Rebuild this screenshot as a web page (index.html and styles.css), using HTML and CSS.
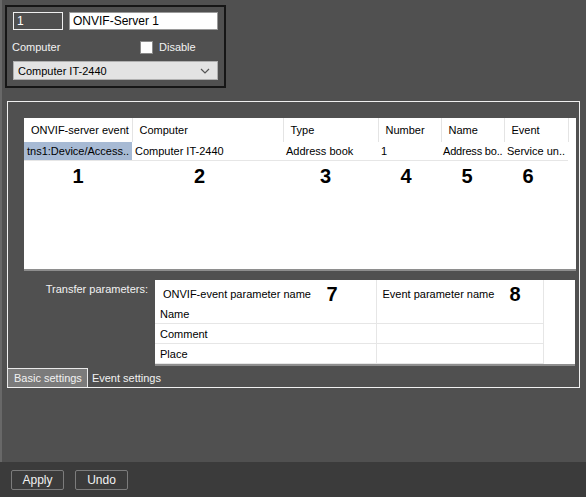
FILE: index.html
```html
<!DOCTYPE html>
<html lang="en">
<head>
    <meta charset="UTF-8">
    <title>ONVIF-Server 1</title>
    <link rel="stylesheet" href="styles.css">
</head>
<body>
    <div class="main">
        <div class="server-box">
            <div class="row-ids">
                <input type="text" class="id-input" value="1">
                <input type="text" class="name-input" value="ONVIF-Server 1">
            </div>
            <div class="row-computer">
                <span class="computer-label">Computer</span>
                <label class="disable"><span class="check"></span>Disable</label>
            </div>
            <div class="select">
                <span>Computer IT-2440</span>
                <svg class="chevron" width="10" height="6" viewBox="0 0 10 6"><path d="M1 1 L5 5 L9 1" fill="none" stroke="#555" stroke-width="1.2"/></svg>
            </div>
        </div>

        <div class="frame">
            <div class="frame-body">
                <div class="events">
                    <table class="events-table">
                        <colgroup>
                            <col class="c1"><col class="c2"><col class="c3"><col class="c4"><col class="c5"><col class="c6">
                        </colgroup>
                        <thead>
                            <tr>
                                <th>ONVIF-server event</th>
                                <th>Computer</th>
                                <th>Type</th>
                                <th>Number</th>
                                <th>Name</th>
                                <th>Event</th>
                            </tr>
                        </thead>
                        <tbody>
                            <tr>
                                <td class="selected">tns1:Device/Access..</td>
                                <td>Computer IT-2440</td>
                                <td>Address book</td>
                                <td>1</td>
                                <td class="tight">Address bo..</td>
                                <td>Service un..</td>
                            </tr>
                        </tbody>
                    </table>
                    <div class="marks">
                        <span class="n1">1</span>
                        <span class="n2">2</span>
                        <span class="n3">3</span>
                        <span class="n4">4</span>
                        <span class="n5">5</span>
                        <span class="n6">6</span>
                    </div>
                </div>

                <div class="transfer">
                    <div class="transfer-label">Transfer parameters:</div>
                    <div class="params">
                        <table class="params-table">
                            <colgroup><col class="p1"><col class="p2"></colgroup>
                            <thead>
                                <tr>
                                    <th class="h7"><div class="ph"><span>ONVIF-event parameter name</span><b class="mark">7</b></div></th>
                                    <th class="h8"><div class="ph"><span>Event parameter name</span><b class="mark">8</b></div></th>
                                </tr>
                            </thead>
                            <tbody>
                                <tr><td>Name</td><td></td></tr>
                                <tr><td>Comment</td><td></td></tr>
                                <tr><td>Place</td><td></td></tr>
                            </tbody>
                        </table>
                    </div>
                </div>
            </div>

            <div class="tabs">
                <span class="tab active">Basic settings</span>
                <span class="tab">Event settings</span>
            </div>
        </div>
    </div>

    <div class="footer">
        <button class="btn">Apply</button>
        <button class="btn">Undo</button>
    </div>
</body>
</html>
```

FILE: styles.css
```css
body {
    margin: 0;
    width: 586px;
    height: 497px;
    display: flex;
    flex-direction: column;
    background-color: #505050;
    font-family: "Liberation Sans", Arial, sans-serif;
    font-size: 11px;
    color: #f2f2f2;
    overflow: hidden;
}
.main {
    flex: 1;
    border-left: 2px solid #686868;
    padding: 5px 0 0 3px;
}

/* top box */
.server-box {
    width: 221px;
    height: 83px;
    box-sizing: border-box;
    border: 2px solid #161616;
    padding: 5px 6px 0 6px;
}
.row-ids {
    display: flex;
    gap: 6px;
}
.id-input, .name-input {
    height: 18px;
    box-sizing: border-box;
    padding: 0 3px;
    font-family: inherit;
    font-size: 12px;
    outline: none;
}
.id-input {
    width: 50px;
    border: 1px solid #f0f0f0;
    background-color: #505050;
    color: #fff;
}
.name-input {
    width: 149px;
    border: 1px solid #9a9a9a;
    background-color: #fff;
    color: #000;
}
.row-computer {
    display: flex;
    align-items: center;
    height: 12px;
    margin-top: 11px;
}
.computer-label {
    width: 128px;
    margin-left: -1px;
}
.disable {
    display: flex;
    align-items: center;
    gap: 6px;
}
.check {
    width: 11px;
    height: 11px;
    border: 1px solid #8a8a8a;
    background-color: #fff;
}
.select {
    display: flex;
    align-items: center;
    justify-content: space-between;
    width: 205px;
    height: 19px;
    box-sizing: border-box;
    margin-top: 8px;
    padding: 0 7px 0 4px;
    background-color: #e3e3e3;
    border: 1px solid #b0b0b0;
    color: #000;
}

/* settings frame */
.frame {
    width: 573px;
    height: 287px;
    box-sizing: border-box;
    margin: 13px 0 0 2px;
    border: 1px solid #f0f0f0;
    display: flex;
    flex-direction: column;
}
.frame-body {
    flex: 1;
    padding: 16px 3px 0 16px;
}
.events {
    height: 151px;
    background-color: #fff;
    border-bottom: 2px solid #8e8e8e;
    color: #000;
}
.events-table {
    border-collapse: collapse;
    table-layout: fixed;
    width: 544px;
}
.c1 { width: 108px; }
.c2 { width: 151px; }
.c3 { width: 95px; }
.c4 { width: 63px; }
.c5 { width: 63px; }
.c6 { width: 64px; }
.events-table th {
    height: 24px;
    padding: 0 0 0 7px;
    text-align: left;
    font-weight: normal;
    border-right: 1px solid #e4e4e4;
    white-space: nowrap;
    overflow: hidden;
}
.events-table td {
    height: 18px;
    padding: 0 0 0 3px;
    border-bottom: 1px solid #e6e6e6;
    white-space: nowrap;
    overflow: hidden;
}
.events-table td.tight {
    padding-left: 2px;
    letter-spacing: -0.2px;
}
.events-table td.selected {
    background-color: #a7bad4;
}
.marks {
    display: grid;
    grid-template-columns: 108px 151px 95px 63px 63px 64px;
    margin-top: 4px;
    font-size: 20px;
    font-weight: bold;
    text-align: center;
}
.n2 { padding-right: 16px; }
.n3 { padding-right: 10px; }
.n4 { padding-right: 7px; }
.n5 { padding-right: 11px; }
.n6 { padding-right: 16px; }

.transfer {
    display: flex;
    gap: 7px;
    margin-top: 9px;
}
.transfer-label {
    width: 124px;
    text-align: right;
    padding-top: 3px;
}
.params {
    width: 420px;
    height: 84px;
    background-color: #fff;
    border-bottom: 2px solid #8e8e8e;
    color: #000;
}
.params-table {
    border-collapse: collapse;
    table-layout: fixed;
    width: 388px;
}
.p1 { width: 221px; }
.p2 { width: 167px; }
.params-table th {
    height: 24px;
    padding: 0 0 0 8px;
    text-align: left;
    font-weight: normal;
    border-right: 1px solid #e6e6e6;
}
.params-table th.h8 {
    padding-left: 6px;
}
.ph {
    display: flex;
    align-items: center;
    height: 24px;
    padding-top: 4px;
    box-sizing: border-box;
}
.mark {
    margin-left: auto;
    font-size: 20px;
    line-height: 20px;
}
.h7 .mark { margin-right: 38px; }
.h8 .mark { margin-right: 22px; }
.params-table td {
    height: 19px;
    padding: 0 0 0 5px;
    border-bottom: 1px solid #e6e6e6;
    border-right: 1px solid #e6e6e6;
}

.tabs {
    display: flex;
    align-items: flex-end;
    height: 19px;
}
.tab {
    height: 18px;
    line-height: 18px;
    padding: 0 4px;
}
.tab.active {
    padding: 0 5px 0 6px;
    background-color: #7b7b7b;
    border: 1px solid #e8e8e8;
    border-bottom: none;
    margin-left: -1px;
}

/* bottom bar */
.footer {
    height: 35px;
    box-sizing: border-box;
    padding: 8px 11px;
    display: flex;
    gap: 11px;
    background-color: #3b3b3b;
}
.btn {
    width: 53px;
    height: 20px;
    padding: 0;
    background-color: #3b3b3b;
    border: 1px solid #7c7c7c;
    border-radius: 2px;
    color: #f2f2f2;
    font-family: inherit;
    font-size: 12px;
}
```
